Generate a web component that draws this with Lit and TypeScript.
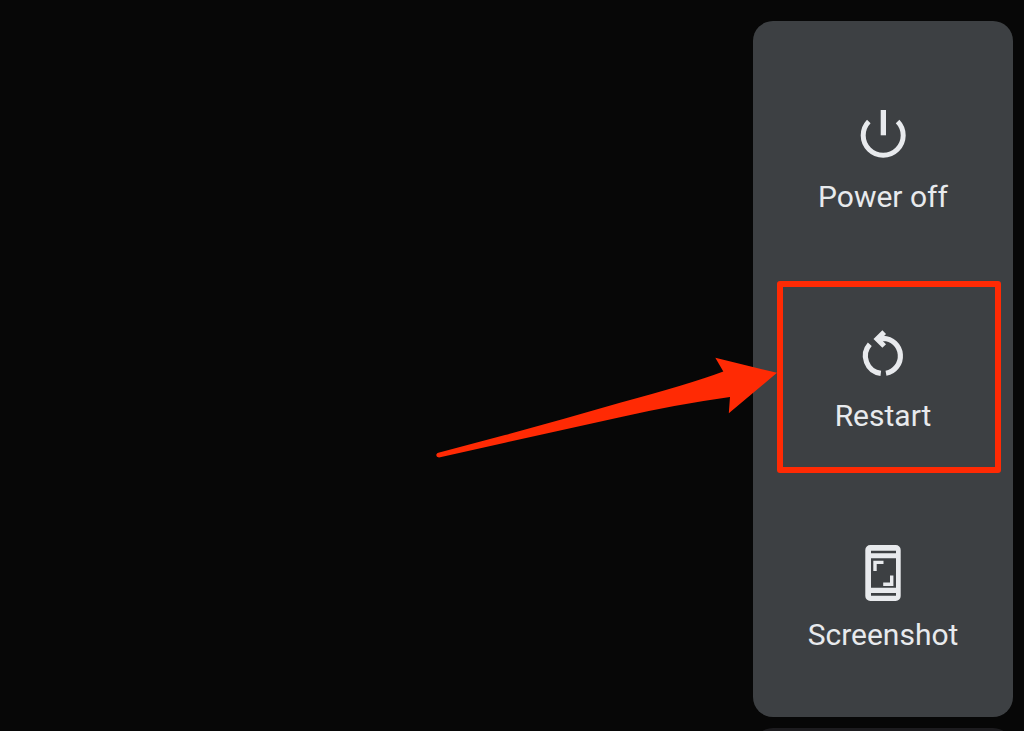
import { LitElement, html, css, svg } from "lit";
import { customElement } from "lit/decorators.js";

const powerIcon = svg`
  <path d="M27.7 6h5.3v25.3h-5.3z" fill="currentColor" />
  <path d="M15.8 17.4A20 20 0 1 0 44.6 17.4" fill="none" stroke="currentColor" stroke-width="5" />
`;

const restartIcon = svg`
  <g fill="none" stroke="currentColor" stroke-width="5.2">
    <path d="M16.8 21.2A17.6 17.6 0 0 0 27.8 50.3" />
    <path d="M33 50.3A17.6 17.6 0 0 0 30.2 15.4L25 16" />
    <path d="M31.2 9.2L24.2 16.1L31.2 23" />
  </g>
`;

const screenshotIcon = svg`
  <path fill="currentColor" fill-rule="evenodd"
    d="M17.3 3h25.4a5 5 0 0 1 5 5v46a5 5 0 0 1-5 5H17.3a5 5 0 0 1-5-5V8a5 5 0 0 1 5-5z
       M18 8.7v2.6h25V8.7z M18 16.3v29.4h25V16.3z M18 51v2.7h25V51z" />
  <path fill="currentColor" d="M20.3 18.7h10.2v3.4h-6.8v7h-3.4z M40.4 44H30.2v-3.4H37v-7h3.4z" />
`;

@customElement("app-root")
export class AppRoot extends LitElement {
  static styles = css`
    :host {
      display: flex;
      flex-direction: column;
      align-items: flex-end;
      gap: 11px;
      box-sizing: border-box;
      height: 100vh;
      padding: 21px 11px 0;
      overflow: hidden;
      background: #070707;
      font-family: Roboto, sans-serif;
    }
    .panel {
      display: flex;
      flex-direction: column;
      flex: none;
      gap: 27px;
      box-sizing: border-box;
      width: 260px;
      padding: 41px 12px 25px;
      border-radius: 20px;
      background: #3d4043;
    }
    .item {
      position: relative;
    }
    .action {
      display: flex;
      flex-direction: column;
      align-items: center;
      gap: 15px;
      width: 100%;
      margin: 0;
      padding: 42px 0 39px;
      border: 0;
      background: none;
      color: #e8eaed;
      font: 400 30px/36px Roboto, sans-serif;
      cursor: pointer;
    }
    .icon {
      display: block;
      width: 60px;
      height: 60px;
    }
    .highlight {
      position: absolute;
      inset: 0 0 0 12px;
      border: 6px solid #ff2a04;
      border-radius: 3px;
      pointer-events: none;
    }
    .arrow {
      position: absolute;
      top: 66px;
      right: calc(100% + 2px);
      width: 348px;
      height: 110px;
    }
    .next {
      flex: none;
      width: 260px;
      height: 120px;
      border-radius: 20px;
      background: #1d1c1f;
    }
  `;

  private item(label: string, icon: unknown, marked = false) {
    return html`
      <div class="item">
        <button class="action" type="button">
          <svg class="icon" viewBox="0 0 60 60" aria-hidden="true">${icon}</svg>
          <span>${label}</span>
        </button>
        ${marked
          ? html`<div class="highlight" aria-hidden="true">
              <svg class="arrow" viewBox="0 0 348 110">
                <path
                  fill="#ff2a04"
                  d="M5.3 99.8L72 82Q130 66.3 187 49.7Q257 31 290.3 18.5L282.3 4.8L344 19.8L295.8 60.3L297 44Q240 52 187 64.3L72 89.7L6 104.4Q2.5 104 3.5 101.2Q4 100.2 5.3 99.8Z"
                />
              </svg>
            </div>`
          : null}
      </div>
    `;
  }

  render() {
    return html`
      <div class="panel" role="group" aria-label="Power menu">
        ${this.item("Power off", powerIcon)}
        ${this.item("Restart", restartIcon, true)}
        ${this.item("Screenshot", screenshotIcon)}
      </div>
      <div class="next"></div>
    `;
  }
}
